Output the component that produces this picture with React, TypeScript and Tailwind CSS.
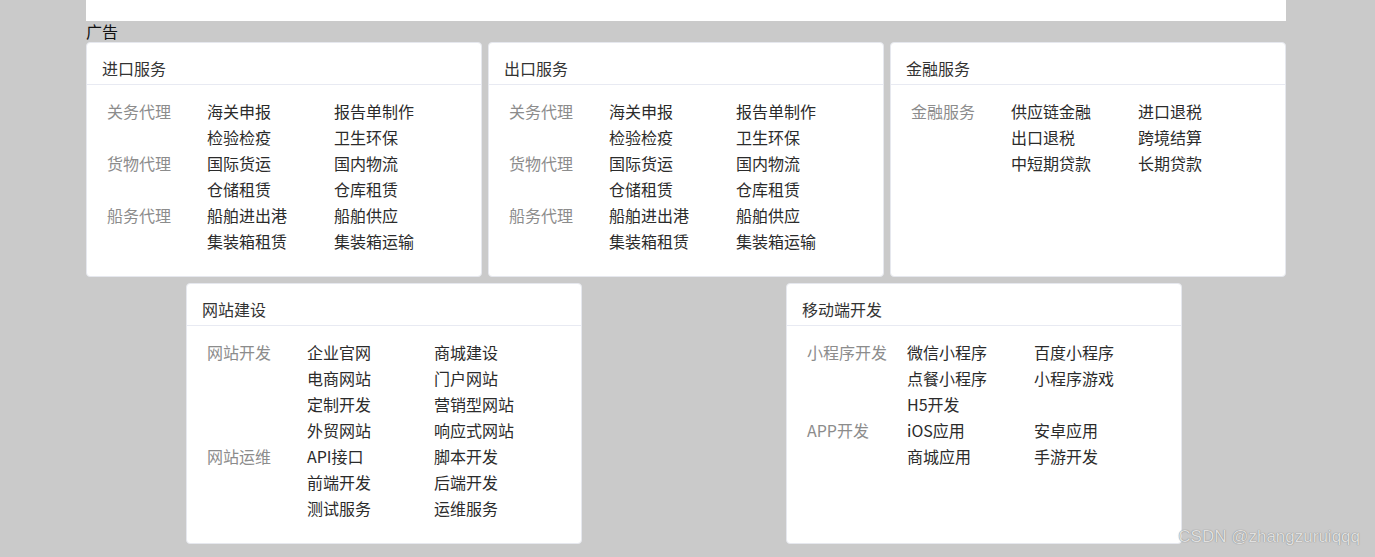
import React from 'react';

type Group = { label: string; items: string[] };
type CardData = { title: string; groups: Group[] };

const topRow: CardData[] = [
  {
    title: '进口服务',
    groups: [
      { label: '关务代理', items: ['海关申报', '报告单制作', '检验检疫', '卫生环保'] },
      { label: '货物代理', items: ['国际货运', '国内物流', '仓储租赁', '仓库租赁'] },
      { label: '船务代理', items: ['船舶进出港', '船舶供应', '集装箱租赁', '集装箱运输'] },
    ],
  },
  {
    title: '出口服务',
    groups: [
      { label: '关务代理', items: ['海关申报', '报告单制作', '检验检疫', '卫生环保'] },
      { label: '货物代理', items: ['国际货运', '国内物流', '仓储租赁', '仓库租赁'] },
      { label: '船务代理', items: ['船舶进出港', '船舶供应', '集装箱租赁', '集装箱运输'] },
    ],
  },
  {
    title: '金融服务',
    groups: [
      { label: '金融服务', items: ['供应链金融', '进口退税', '出口退税', '跨境结算', '中短期贷款', '长期贷款'] },
    ],
  },
];

const bottomRow: CardData[] = [
  {
    title: '网站建设',
    groups: [
      {
        label: '网站开发',
        items: ['企业官网', '商城建设', '电商网站', '门户网站', '定制开发', '营销型网站', '外贸网站', '响应式网站'],
      },
      { label: '网站运维', items: ['API接口', '脚本开发', '前端开发', '后端开发', '测试服务', '运维服务'] },
    ],
  },
  {
    title: '移动端开发',
    groups: [
      { label: '小程序开发', items: ['微信小程序', '百度小程序', '点餐小程序', '小程序游戏', 'H5开发'] },
      { label: 'APP开发', items: ['iOS应用', '安卓应用', '商城应用', '手游开发'] },
    ],
  },
];

const ServiceCard: React.FC<{ data: CardData }> = ({ data }) => (
  <div className="w-[396px] bg-white border border-[#e6e8ee] rounded-[4px] flex flex-col">
    {/* Header */}
    <div className="px-[15px] pt-[15px] pb-[6px] leading-[20px] text-[16px] text-[#333] border-b border-[#e8eaf2]">
      {data.title}
    </div>
    {/* Body */}
    <div className="pl-[20px] pt-[13px] pb-[22px] text-[16px] leading-[26px]">
      {data.groups.map((g) => (
        <div key={g.label} className="flex">
          <div className="w-[100px] shrink-0 text-[#8c8c8c]">{g.label}</div>
          <div className="grid grid-cols-[127px_127px]">
            {g.items.map((it) => (
              <div key={it} className="text-[#2b2b2b] whitespace-nowrap">
                {it}
              </div>
            ))}
          </div>
        </div>
      ))}
    </div>
  </div>
);

export default function App() {
  return (
    <div
      className="relative min-h-screen bg-[#cacaca]"
      style={{ fontFamily: '"Noto Sans CJK SC", "Noto Sans", sans-serif' }}
    >
      <div className="w-[1200px] ml-[86px]">
        <div className="h-[21px] bg-white" />
        <div className="text-[16px] leading-[21px] text-[#111]">广告</div>
        <div className="flex gap-[6px]">
          {topRow.map((c) => (
            <ServiceCard key={c.title} data={c} />
          ))}
        </div>
        <div className="flex gap-[204px] pl-[100px] mt-[6px]">
          {bottomRow.map((c) => (
            <ServiceCard key={c.title} data={c} />
          ))}
        </div>
      </div>
      <div
        className="absolute right-[15px] top-[526px] text-[17px] leading-[22px] text-[#e0e0e0]"
        style={{ fontFamily: '"Liberation Sans", Arial, sans-serif', textShadow: '0 0 1px #666' }}
      >
        CSDN @zhangzuruiqqq
      </div>
    </div>
  );
}
